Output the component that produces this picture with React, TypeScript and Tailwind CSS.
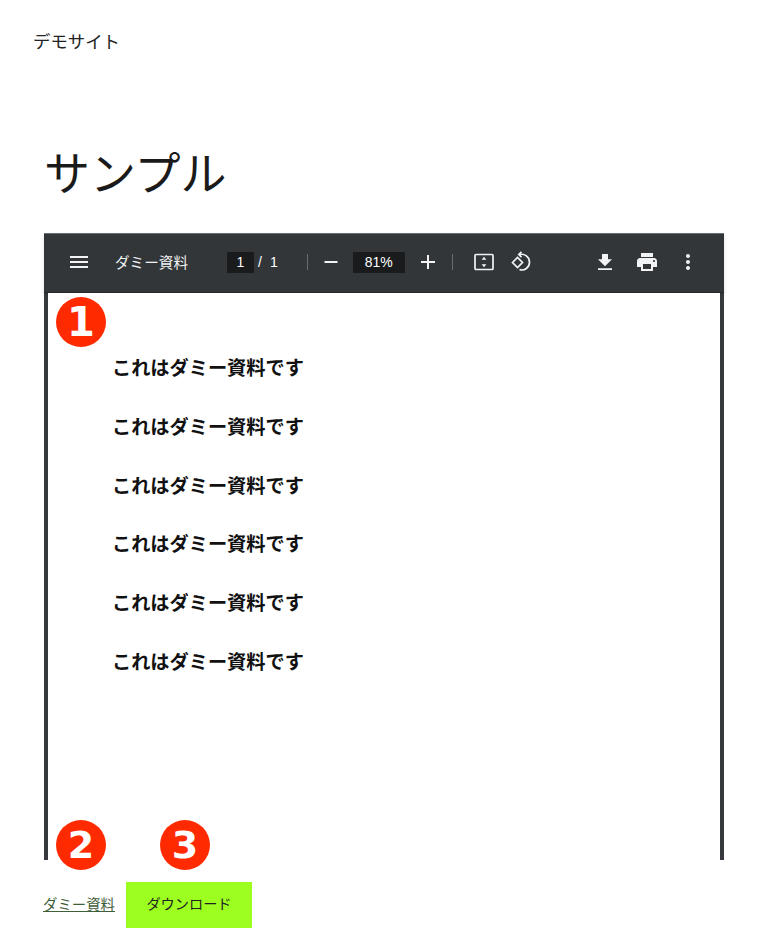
const font = "font-['Noto_Sans_CJK_JP','Noto_Sans',sans-serif]";

function Badge({ n, className }: { n: string; className: string }) {
  return (
    <div className={`absolute w-[50px] h-[50px] rounded-full bg-[#ff2a00] flex items-center justify-center text-white font-bold font-['DejaVu_Sans',sans-serif] leading-none ${className}`}>
      {n}
    </div>
  );
}

function ToolIcon({ d, className = '' }: { d: string; className?: string }) {
  return (
    <svg className={`w-6 h-6 ${className}`} viewBox="0 0 24 24" fill="#f1f3f4">
      <path d={d} />
    </svg>
  );
}

export default function App() {
  const rows = [0, 1, 2, 3, 4, 5];
  return (
    <div className={`relative w-[768px] h-[946px] bg-white overflow-hidden text-[#1a1a1a] ${font}`}>
      {/* Site header */}
      <div className="pl-[33px] pt-[28px] text-[17.4px] leading-[26px] text-[#222]">デモサイト</div>

      <h1 className="pl-[44px] mt-[80px] text-[46px] leading-[72px] font-normal">サンプル</h1>

      {/* PDF viewer */}
      <div className="mt-[27px] ml-[44px] w-[680px] h-[627px] border-x-4 border-[#363a3e] flex flex-col">
        <div className="-mx-1 h-[60px] shrink-0 bg-[#323639] pb-[2px] border-t border-[#6b6e70] border-b-[#26292b] border-b flex items-center text-white font-['Liberation_Sans','Noto_Sans_CJK_JP',sans-serif] shadow-[0_2px_4px_rgba(0,0,0,0.12)]">
          <ToolIcon className="ml-[23px]" d="M3 18h18v-2H3v2zm0-5h18v-2H3v2zm0-7v2h18V6H3z" />
          <span className={`ml-[24px] w-[86px] text-[14.6px] text-[#f1f3f4] ${font}`}>ダミー資料</span>
          <span className="ml-[26px] w-[27px] h-[21px] bg-[#191b1c] text-[14px] leading-[21px] text-center">1</span>
          <span className="ml-[4px] text-[14px]">/</span>
          <span className="ml-[8px] text-[14px] text-white">1</span>
          <div className="ml-[29px] w-px h-[16px] bg-[#6a6d70]" />
          <ToolIcon className="ml-[11px]" d="M5.5 11h13v2h-13z" />
          <span className="ml-[10px] w-[52px] h-[21px] bg-[#191b1c] text-[14px] leading-[21px] text-center">81%</span>
          <ToolIcon className="ml-[11px]" d="M19 13h-6v6h-2v-6H5v-2h6V5h2v6h6v2z" />
          <div className="ml-[12px] w-px h-[16px] bg-[#6a6d70]" />
          <svg className="ml-[20px] w-[22px] h-[22px]" viewBox="0 0 22 22" fill="none">
            <rect x="2" y="3.5" width="18" height="15" rx="1" stroke="#f1f3f4" strokeWidth="1.7" />
            <path d="M11 5.8l2.4 3h-4.8zM11 16.2l-2.4-3h4.8z" fill="#f1f3f4" />
          </svg>
          <svg className="ml-[15px] w-[22px] h-[22px]" viewBox="0 0 22 22" fill="none" stroke="#f1f3f4" strokeWidth="1.7">
            <path d="M2.5 11.5L7.5 6.5l5 5-5 5z" />
            <path d="M9.5 3.5c5-1.2 10 2.2 10 7.8 0 5.2-5 9-10 7.2" />
            <path d="M11.5 0.8L8.8 3.5l2.7 2.7" />
          </svg>
          <ToolIcon className="ml-[61px]" d="M19 9.2h-4V4H9v5.2H5l7 7 7-7zM5 18.2V20h14v-1.8H5z" />
          <ToolIcon className="ml-[18px]" d="M19 8H5c-1.66 0-3 1.34-3 3v6h4v4h12v-4h4v-6c0-1.66-1.34-3-3-3zm-3 11H8v-5h8v5zm3-7c-.55 0-1-.45-1-1s.45-1 1-1 1 .45 1 1-.45 1-1 1zm-1-9H6v4h12V3z" />
          <ToolIcon className="ml-[17px]" d="M12 8c1.1 0 2-.9 2-2s-.9-2-2-2-2 .9-2 2 .9 2 2 2zm0 2c-1.1 0-2 .9-2 2s.9 2 2 2 2-.9 2-2-.9-2-2-2zm0 6c-1.1 0-2 .9-2 2s.9 2 2 2 2-.9 2-2-.9-2-2-2z" />
        </div>

        {/* PDF page */}
        <div className="flex-1 pl-[64px] pt-[60px] flex flex-col gap-[30.8px] bg-white">
          {rows.map((r) => (
            <p key={r} className="text-[19.2px] leading-[28px] font-bold text-[#111]">これはダミー資料です</p>
          ))}
        </div>
      </div>

      {/* Links below the viewer */}
      <div className="ml-[43px] mt-[22px] flex items-center">
        <a href="#" className="w-[83px] -mt-[2px] text-[14.4px] text-[#3f5f3a] underline">ダミー資料</a>
        <a href="#" className="w-[126px] h-[46px] pb-[2px] bg-[#9dff1f] flex items-center justify-center text-[14.2px] text-[#222]">ダウンロード</a>
      </div>

      <Badge n="1" className="left-[56px] top-[297px] text-[40px]" />
      <Badge n="2" className="left-[56px] top-[820px] text-[38px]" />
      <Badge n="3" className="left-[160px] top-[820px] text-[38px]" />
    </div>
  );
}
